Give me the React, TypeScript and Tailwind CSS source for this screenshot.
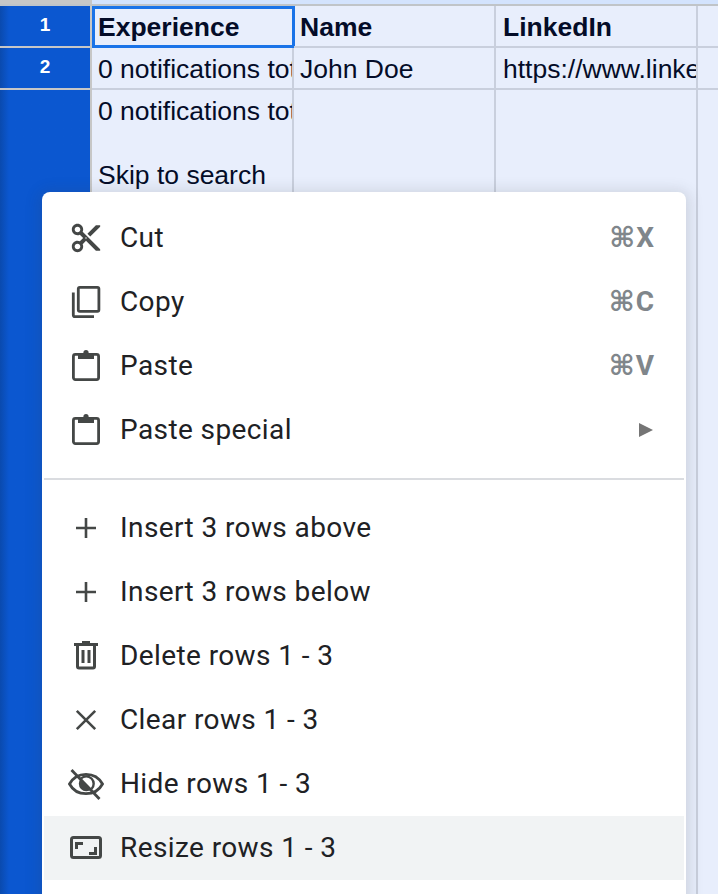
import type { ReactNode } from "react";

const cellFont = "font-['Liberation_Sans',Arial,sans-serif] text-[26.5px] text-[#040c28]";

const CutIcon = () => (
  <svg viewBox="0 0 24 24" className="w-[34px] h-[34px]" fill="#444746">
    <path d="M9.64 7.64c.23-.5.36-1.05.36-1.64 0-2.21-1.79-4-4-4S2 3.79 2 6s1.79 4 4 4c.59 0 1.14-.13 1.64-.36L10 12l-2.36 2.36C7.14 14.13 6.59 14 6 14c-2.21 0-4 1.79-4 4s1.79 4 4 4 4-1.79 4-4c0-.59-.13-1.14-.36-1.64L12 14l7 7h3v-1L9.64 7.64zM6 8c-1.1 0-2-.89-2-2s.9-2 2-2 2 .89 2 2-.9 2-2 2zm0 12c-1.1 0-2-.89-2-2s.9-2 2-2 2 .89 2 2-.9 2-2 2zm6-7.5c-.28 0-.5-.22-.5-.5s.22-.5.5-.5.5.22.5.5-.22.5-.5.5zM19 3l-6 6 2 2 7-7V3h-3z" />
  </svg>
);

const CopyIcon = () => (
  <svg viewBox="0 0 36 36" className="w-9 h-9" fill="none" stroke="#444746" strokeWidth="2.8">
    <rect x="10.3" y="3.3" width="20.6" height="24" rx="1.5" />
    <path d="M5.3 8.5V31c0 1 .7 1.7 1.7 1.7h19" />
  </svg>
);

const PasteIcon = () => (
  <svg viewBox="0 0 36 36" className="w-9 h-9">
    <rect x="5.4" y="6.4" width="25.2" height="25.2" rx="2" fill="none" stroke="#444746" strokeWidth="2.8" />
    <rect x="10" y="5" width="16" height="6" fill="#444746" />
    <circle cx="18" cy="4.6" r="2.6" fill="#444746" />
  </svg>
);

const PlusIcon = () => (
  <svg viewBox="0 0 36 36" className="w-9 h-9" stroke="#444746" strokeWidth="2.6">
    <path d="M8 18h20M18 8v20" />
  </svg>
);

const TrashIcon = () => (
  <svg viewBox="0 0 36 36" className="w-9 h-9" fill="none" stroke="#444746" strokeWidth="3">
    <path d="M6 6.500h24M14 4.500h8" />
    <path d="M9.500 6.500V28.500c0 1 .5 1.500 1.500 1.500h14c1 0 1.500-.5 1.500-1.500V6.500" />
    <path d="M15 12v13M21 12v13" />
  </svg>
);

const ClearIcon = () => (
  <svg viewBox="0 0 36 36" className="w-9 h-9" stroke="#444746" strokeWidth="2.6">
    <path d="M8.8 8.8l18.4 18.4M27.2 8.8L8.8 27.2" />
  </svg>
);

const HideIcon = () => (
  <svg viewBox="0 0 36 36" className="w-9 h-9" fill="none" stroke="#444746" strokeWidth="2.8">
    <path d="M1.500 18C5 11.500 11 8.300 18 8.300S31 11.500 34.500 18C31 24.500 25 27.700 18 27.700S5 24.500 1.500 18z" />
    <path d="M13 12.500a7.400 7.400 0 0 0 10.500 10.500z" fill="#444746" stroke="none" />
    <path d="M13 12.500a7.400 7.400 0 0 1 10.500 10.500" strokeWidth="2.400" />
    <path d="M3.500 4l28 29" />
  </svg>
);

const ResizeIcon = () => (
  <svg viewBox="0 0 36 36" className="w-9 h-9" fill="none" stroke="#444746" strokeWidth="3">
    <rect x="3.500" y="7.500" width="29" height="20" rx="2" />
    <path d="M8.500 19v-5.500H15M27.500 17v6.500H21" />
  </svg>
);

type MenuRowProps = {
  icon?: ReactNode;
  label: string;
  shortcut?: string;
  submenu?: boolean;
  active?: boolean;
};

const MenuRow = ({ icon, label, shortcut, submenu, active }: MenuRowProps) => (
  <div className={`flex h-16 items-center mx-0.5 pl-[24px] pr-[30px] ${active ? "bg-[#f1f3f4]" : ""}`}>
    <div className="w-9 h-9 flex items-center justify-center shrink-0">{icon}</div>
    <span className="ml-[16px] flex-1 text-[28px] tracking-[0.4px] text-[#202124] font-['Roboto',sans-serif]">
      {label}
    </span>
    {shortcut && (
      <span className="text-[28px] tracking-[1px] -mr-px font-bold text-[#80868b] font-['Roboto','DejaVu_Sans',sans-serif]">
        {shortcut}
      </span>
    )}
    {submenu && (
      <svg viewBox="0 0 14 14" className="w-3.5 h-3.5 mr-px">
        <path d="M0 0l14 7-14 7z" fill="#757575" />
      </svg>
    )}
  </div>
);

const RowHeader = ({ n }: { n?: number }) => (
  <div
    className={`h-full bg-gradient-to-r from-[#0a4aae] from-0% to-[#0b57d0] to-[10%] text-white text-center font-bold text-[19px] leading-[37px] font-['Liberation_Sans',sans-serif] border-r-2 border-[#c7c7c7] ${n ? "border-b-2" : ""}`}
  >
    {n}
  </div>
);

const App = () => {
  return (
    <div className="relative w-[718px] h-[894px] overflow-hidden bg-[#e8eefc]">
      {/* sheet */}
      <div className="h-1.5 flex border-b-2 border-[#c0c4c8]">
        <div className="w-[92px] bg-[#c7c7c7]" />
        <div className="flex-1 bg-[#d3e3fd]" />
      </div>
      <div className="grid grid-cols-[92px_202px_202px_202px_20px] grid-rows-[42px_42px_806px]">
        <RowHeader n={1} />
        <div className={`${cellFont} font-bold border-[3px] border-[#1a73e8] pl-[3px] leading-[37px] overflow-hidden whitespace-nowrap -mr-px`}>
          Experience
        </div>
        <div className={`${cellFont} font-bold border-r-2 border-b-2 border-[#c9cfdd] pl-[6px] leading-[42px]`}>
          Name
        </div>
        <div className={`${cellFont} font-bold border-r-2 border-b-2 border-[#c9cfdd] pl-[7px] leading-[42px]`}>
          LinkedIn
        </div>
        <div className="border-b-2 border-[#c9cfdd]" />

        <RowHeader n={2} />
        <div className={`${cellFont} border-r-2 border-b-2 border-[#c9cfdd] pl-[6px] leading-[42px] overflow-hidden whitespace-nowrap`}>
          0 notifications total
        </div>
        <div className={`${cellFont} border-r-2 border-b-2 border-[#c9cfdd] pl-[6px] leading-[42px]`}>
          John Doe
        </div>
        <div className={`${cellFont} border-r-2 border-b-2 border-[#c9cfdd] pl-[7px] leading-[42px] overflow-hidden whitespace-nowrap`}>
          https://www.linkedin.com
        </div>
        <div className="border-b-2 border-[#c9cfdd]" />

        <RowHeader />
        <div className={`${cellFont} border-r-2 border-[#c9cfdd] pl-[6px] leading-[32px] pt-[5px] overflow-hidden whitespace-nowrap`}>
          <div>0 notifications total</div>
          <div className="h-8" />
          <div>Skip to search</div>
        </div>
        <div className="border-r-2 border-[#c9cfdd]" />
        <div className="border-r-2 border-[#c9cfdd]" />
        <div />
      </div>

      {/* context menu */}
      <div className="absolute left-[42px] top-[192px] w-[644px] h-[760px] bg-white rounded-lg pt-[14px] shadow-[0_2px_14px_4px_rgba(60,64,67,0.15)]">
        <MenuRow icon={<CutIcon />} label="Cut" shortcut="⌘X" />
        <MenuRow icon={<CopyIcon />} label="Copy" shortcut="⌘C" />
        <MenuRow icon={<PasteIcon />} label="Paste" shortcut="⌘V" />
        <MenuRow icon={<PasteIcon />} label="Paste special" submenu />
        <div className="my-4 mx-0.5 h-0.5 bg-[#dadce0]" />
        <MenuRow icon={<PlusIcon />} label="Insert 3 rows above" />
        <MenuRow icon={<PlusIcon />} label="Insert 3 rows below" />
        <MenuRow icon={<TrashIcon />} label="Delete rows 1 - 3" />
        <MenuRow icon={<ClearIcon />} label="Clear rows 1 - 3" />
        <MenuRow icon={<HideIcon />} label="Hide rows 1 - 3" />
        <MenuRow icon={<ResizeIcon />} label="Resize rows 1 - 3" active />
      </div>
    </div>
  );
};

export default App;
